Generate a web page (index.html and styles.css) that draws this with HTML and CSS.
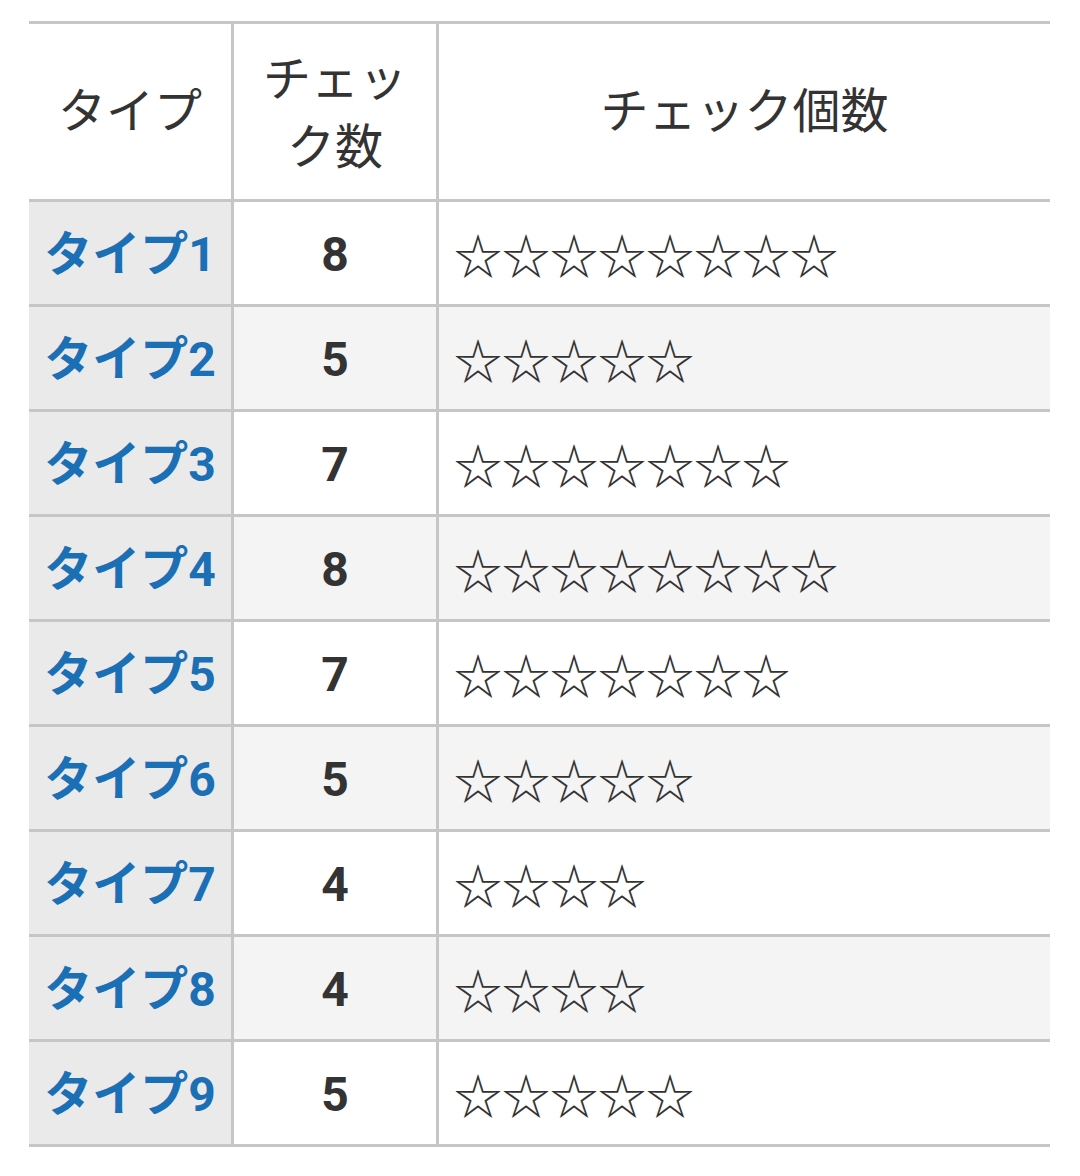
FILE: index.html
```html
<!DOCTYPE html>
<html lang="ja">
<head>
<meta charset="utf-8">
<title>チェック個数</title>
<link rel="stylesheet" href="styles.css">
</head>
<body>
<div class="wrap">
<table class="check-table">
  <thead>
    <tr>
      <th class="c-type">タイプ</th>
      <th class="c-num">チェック数</th>
      <th class="c-stars">チェック個数</th>
    </tr>
  </thead>
  <tbody>
    <tr><td class="c-type">タイプ1</td><td class="c-num">8</td><td class="c-stars">☆☆☆☆☆☆☆☆</td></tr>
    <tr><td class="c-type">タイプ2</td><td class="c-num">5</td><td class="c-stars">☆☆☆☆☆</td></tr>
    <tr><td class="c-type">タイプ3</td><td class="c-num">7</td><td class="c-stars">☆☆☆☆☆☆☆</td></tr>
    <tr><td class="c-type">タイプ4</td><td class="c-num">8</td><td class="c-stars">☆☆☆☆☆☆☆☆</td></tr>
    <tr><td class="c-type">タイプ5</td><td class="c-num">7</td><td class="c-stars">☆☆☆☆☆☆☆</td></tr>
    <tr><td class="c-type">タイプ6</td><td class="c-num">5</td><td class="c-stars">☆☆☆☆☆</td></tr>
    <tr><td class="c-type">タイプ7</td><td class="c-num">4</td><td class="c-stars">☆☆☆☆</td></tr>
    <tr><td class="c-type">タイプ8</td><td class="c-num">4</td><td class="c-stars">☆☆☆☆</td></tr>
    <tr><td class="c-type">タイプ9</td><td class="c-num">5</td><td class="c-stars">☆☆☆☆☆</td></tr>
  </tbody>
</table>
</div>
</body>
</html>
```
FILE: styles.css
```css
html, body {
  margin: 0;
  padding: 0;
  background: #ffffff;
}

.wrap {
  padding: 21px 30px 0 29px;
}

.check-table {
  width: 1021px;
  table-layout: fixed;
  border-collapse: separate;
  border-spacing: 0;
  border-top: 3px solid #c6c6c6;
  font-family: Roboto, "Noto Sans CJK JP", sans-serif;
  font-size: 48px;
  line-height: 68px;
  color: #333333;
}

.check-table th,
.check-table td {
  box-sizing: border-box;
  border-bottom: 3px solid #c6c6c6;
  vertical-align: middle;
  padding: 17px 16px;
}

.check-table th {
  font-weight: normal;
  text-align: center;
  padding: 20px 20px 19px;
  background: #ffffff;
}

.check-table th.c-num {
  padding-top: 22px;
  padding-bottom: 17px;
}

.check-table th + th,
.check-table td + td {
  border-left: 3px solid #c6c6c6;
}

.c-type { width: 202px; }
.c-num { width: 205px; }
.c-stars { width: 614px; }

td.c-type {
  background: #eaeaea;
  color: #1a6fb5;
  font-weight: bold;
  text-align: center;
  padding: 19px 8px 15px;
}

td.c-num {
  font-weight: bold;
  text-align: center;
  background: #ffffff;
  padding-top: 19px;
  padding-bottom: 15px;
}

td.c-stars {
  font-family: "Noto Sans CJK JP", sans-serif;
  text-align: left;
  white-space: nowrap;
  background: #ffffff;
  padding-left: 15px;
}

tbody tr:nth-child(even) td.c-num,
tbody tr:nth-child(even) td.c-stars {
  background: #f4f4f4;
}
```
